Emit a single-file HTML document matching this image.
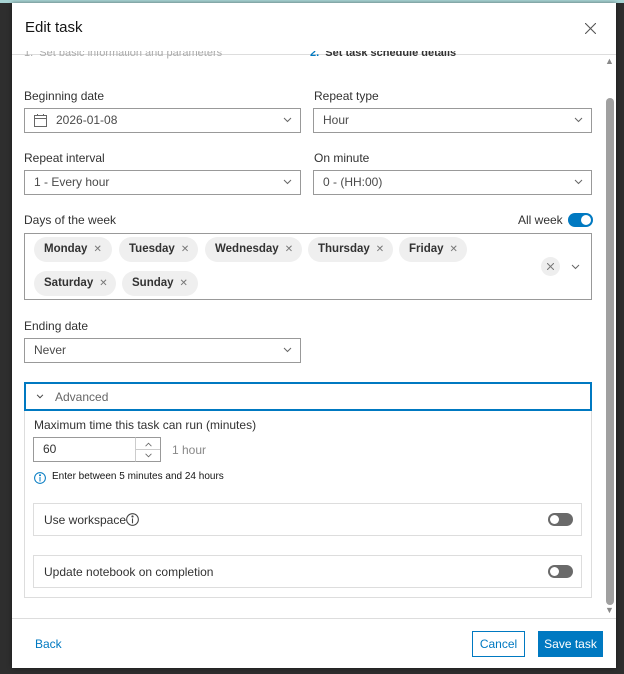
<!DOCTYPE html><html><head><style>
*{box-sizing:border-box;margin:0;padding:0}
body{width:624px;height:674px;background:#2e2e2e;font-family:"Liberation Sans",sans-serif;position:relative;overflow:hidden;color:#323232}
.a{position:absolute}
.modal{left:12px;top:3px;width:604px;height:665px;background:#fff;box-shadow:0 0 4px rgba(0,0,0,.5)}
.lbl{font-size:12px;color:#323232}
.inp{border:1px solid #999;background:#fff;height:25px;font-size:12px;color:#4a4a4a;padding:0 9px;line-height:23px}
.chev{position:absolute;right:8px;top:8px}
.chip{position:absolute;height:25px;border-radius:13px;background:#efefef;font-size:11.5px;font-weight:bold;color:#323232;line-height:25px;padding-left:10px}
.chip span{font-weight:normal;color:#777;margin-left:6px;font-size:10px}
.tog{position:absolute;width:25px;height:13px;border-radius:7px;background:#6a6a6a}
.tog:after{content:"";position:absolute;left:2px;top:2px;width:9px;height:9px;border-radius:50%;background:#fff}
</style></head><body>
<div class="a" style="left:0;top:0;width:624px;height:3px;background:#a8d4d4"></div>
<div class="a modal"></div>
<div class="a" style="left:25px;top:19px;font-size:15px;color:#151515">Edit task</div>
<svg class="a" style="left:585px;top:23px" width="11" height="11" viewBox="0 0 11 11" stroke="#555" stroke-width="1.1"><line x1="0" y1="0" x2="11" y2="11"/><line x1="11" y1="0" x2="0" y2="11"/></svg>
<div class="a" style="left:12px;top:54px;width:604px;height:1px;background:#ddd"></div>
<div class="a" style="left:24px;top:51px;font-size:11px;color:#aaa;height:8px;overflow:hidden;line-height:4px">1.&nbsp; Set basic information and parameters</div>
<div class="a" style="left:310px;top:51px;font-size:11px;color:#333;font-weight:bold;height:8px;overflow:hidden;line-height:4px"><span style="color:#0079c1">2.</span>&nbsp; Set task schedule details</div>
<div class="a" style="left:605px;top:56px;font-size:9px;color:#888">▲</div>
<div class="a" style="left:606px;top:98px;width:8px;height:507px;background:#a0a0a0;border-radius:4px"></div>
<div class="a" style="left:605px;top:605px;font-size:9px;color:#888">▼</div>

<svg width="0" height="0" style="position:absolute"><defs><symbol id="cv" viewBox="0 0 9 6"><polyline points="1,1 4.5,4.5 8,1" fill="none" stroke="#666" stroke-width="1"/></symbol></defs></svg>

<div class="a lbl" style="left:24px;top:89px">Beginning date</div>
<div class="a inp" style="left:24px;top:108px;width:277px;padding-left:31px">2026-01-08<svg class="chev" width="9" height="6"><use href="#cv"/></svg>
<svg class="a" style="left:9px;top:5px" width="13" height="13" viewBox="0 0 13 13" fill="none" stroke="#666"><rect x=".5" y="1.5" width="12" height="11"/><line x1="0" y1="4.5" x2="13" y2="4.5"/><line x1="3.5" y1="0" x2="3.5" y2="2"/><line x1="9.5" y1="0" x2="9.5" y2="2"/></svg></div>
<div class="a lbl" style="left:314px;top:89px">Repeat type</div>
<div class="a inp" style="left:313px;top:108px;width:279px">Hour<svg class="chev" width="9" height="6"><use href="#cv"/></svg></div>

<div class="a lbl" style="left:24px;top:151px">Repeat interval</div>
<div class="a inp" style="left:24px;top:170px;width:277px">1 - Every hour<svg class="chev" width="9" height="6"><use href="#cv"/></svg></div>
<div class="a lbl" style="left:314px;top:151px">On minute</div>
<div class="a inp" style="left:313px;top:170px;width:279px">0 - (HH:00)<svg class="chev" width="9" height="6"><use href="#cv"/></svg></div>

<div class="a lbl" style="left:24px;top:213px">Days of the week</div>
<div class="a lbl" style="left:518px;top:213px">All week</div>
<div class="a" style="left:568px;top:213px;width:25px;height:14px;border-radius:7px;background:#0079c1"><div class="a" style="left:13px;top:2px;width:10px;height:10px;border-radius:50%;background:#fff"></div></div>
<div class="a" style="left:24px;top:233px;width:568px;height:67px;border:1px solid #999"></div>
<div class="chip" style="left:34px;top:237px;width:78px">Monday<span>✕</span></div>
<div class="chip" style="left:119px;top:237px;width:79px">Tuesday<span>✕</span></div>
<div class="chip" style="left:205px;top:237px;width:97px">Wednesday<span>✕</span></div>
<div class="chip" style="left:308px;top:237px;width:85px">Thursday<span>✕</span></div>
<div class="chip" style="left:399px;top:237px;width:68px">Friday<span>✕</span></div>
<div class="chip" style="left:34px;top:271px;width:82px">Saturday<span>✕</span></div>
<div class="chip" style="left:122px;top:271px;width:76px">Sunday<span>✕</span></div>
<div class="a" style="left:541px;top:257px;width:19px;height:19px;border-radius:50%;background:#eee"><svg class="a" style="left:6px;top:6px" width="7" height="7" stroke="#777"><line x1="0" y1="0" x2="7" y2="7"/><line x1="7" y1="0" x2="0" y2="7"/></svg></div>
<svg class="a" style="left:571px;top:264px" width="9" height="6"><use href="#cv"/></svg>

<div class="a lbl" style="left:24px;top:319px">Ending date</div>
<div class="a inp" style="left:24px;top:338px;width:277px">Never<svg class="chev" width="9" height="6"><use href="#cv"/></svg></div>

<div class="a" style="left:24px;top:382px;width:568px;height:216px;border:1px solid #ddd"></div>
<div class="a" style="left:24px;top:382px;width:568px;height:29px;border:2px solid #0079c1;background:#fff"></div>
<svg class="a" style="left:36px;top:394px" width="8" height="5" viewBox="0 0 9 6"><polyline points="1,1 4.5,4.5 8,1" fill="none" stroke="#444" stroke-width="1.2"/></svg>
<div class="a" style="left:55px;top:390px;font-size:12px;color:#666">Advanced</div>
<div class="a lbl" style="left:34px;top:418px">Maximum time this task can run (minutes)</div>
<div class="a inp" style="left:33px;top:437px;width:128px;color:#323232">60</div>
<div class="a" style="left:135px;top:437px;width:26px;height:25px;border:1px solid #999;border-left:1px solid #ccc">
<svg class="a" style="left:8px;top:4px" width="9" height="5" viewBox="0 0 9 6"><polyline points="1,5 4.5,1.5 8,5" fill="none" stroke="#666"/></svg>
<div class="a" style="left:0;top:11px;width:24px;height:1px;background:#ccc"></div>
<svg class="a" style="left:8px;top:15px" width="9" height="5" viewBox="0 0 9 6"><polyline points="1,1 4.5,4.5 8,1" fill="none" stroke="#666"/></svg></div>
<div class="a" style="left:172px;top:443px;font-size:12px;color:#888">1 hour</div>
<svg class="a" style="left:34px;top:472px" width="12" height="12" viewBox="0 0 12 12" fill="none" stroke="#0079c1"><circle cx="6" cy="6" r="5.4"/><line x1="6" y1="5" x2="6" y2="9.5"/><circle cx="6" cy="3.2" r=".5" fill="#0079c1"/></svg>
<div class="a" style="left:52px;top:471px;font-size:10px;color:#151515">Enter between 5 minutes and 24 hours</div>
<div class="a" style="left:33px;top:503px;width:549px;height:33px;border:1px solid #ddd"></div>
<div class="a lbl" style="left:44px;top:513px">Use workspace</div>
<svg class="a" style="left:126px;top:513px" width="13" height="13" viewBox="0 0 12 12" fill="none" stroke="#444"><circle cx="6" cy="6" r="5.4"/><line x1="6" y1="5" x2="6" y2="9.5"/><circle cx="6" cy="3.2" r=".5" fill="#444"/></svg>
<div class="tog" style="left:548px;top:513px"></div>
<div class="a" style="left:33px;top:555px;width:549px;height:33px;border:1px solid #ddd"></div>
<div class="a lbl" style="left:44px;top:565px">Update notebook on completion</div>
<div class="tog" style="left:548px;top:565px"></div>

<div class="a" style="left:12px;top:618px;width:604px;height:1px;background:#ddd"></div>
<div class="a" style="left:35px;top:637px;font-size:12px;color:#0079c1">Back</div>
<div class="a" style="left:472px;top:631px;width:53px;height:26px;border:1px solid #0079c1;color:#0079c1;font-size:12px;text-align:center;line-height:24px">Cancel</div>
<div class="a" style="left:538px;top:631px;width:65px;height:26px;background:#0079c1;color:#fff;font-size:12px;text-align:center;line-height:26px">Save task</div>
</body></html>
